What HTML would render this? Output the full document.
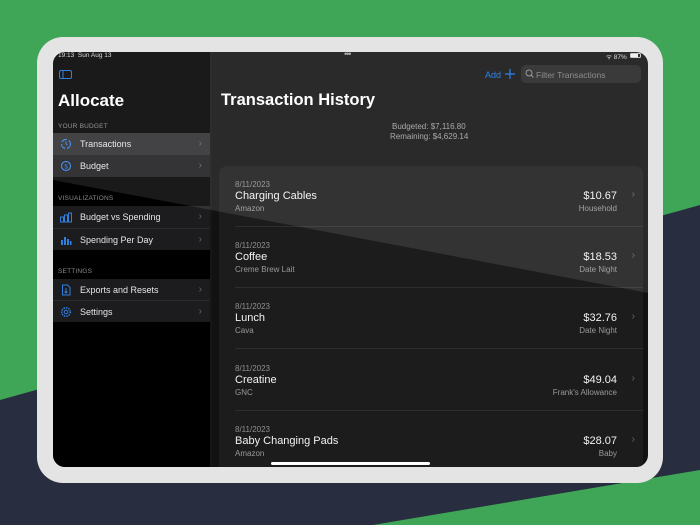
<!DOCTYPE html>
<html><head><meta charset="utf-8"><style>
*{margin:0;padding:0;box-sizing:border-box}
body{width:700px;height:525px;overflow:hidden;background:#40a657;font-family:"Liberation Sans",sans-serif;position:relative}
.abs{position:absolute}
.t{position:absolute;white-space:nowrap}
.row{position:absolute;left:53px;width:157px;height:22px;background:#1c1c1e}
.row .l{position:absolute;left:27px;top:6px;font-size:9px;color:#e6e6e6}
.row .c{position:absolute;right:8px;top:5px;font-size:10px;color:#666}
.row svg{position:absolute;left:7px;top:5px}
.sec{position:absolute;left:58px;font-size:6.5px;color:#8a8a8a;letter-spacing:.2px}
.tr{position:absolute;left:219px;width:424px;height:61px}
.tr .d{position:absolute;left:16px;top:14px;font-size:8px;color:#8e8e8e}
.tr .n{position:absolute;left:16px;top:24px;font-size:11px;color:#f2f2f2}
.tr .m{position:absolute;left:16px;top:38px;font-size:8px;color:#999}
.tr .a{position:absolute;right:26px;top:24px;font-size:11px;color:#f2f2f2}
.tr .k{position:absolute;right:26px;top:38px;font-size:8px;color:#999}
.tr .ch{position:absolute;right:8px;top:23px;font-size:10px;color:#666}
.tr .sep{position:absolute;left:16px;right:0;bottom:0;height:1px;background:#2e2e2e}
</style></head><body>
<svg class="abs" style="left:0;top:0" width="700" height="525"><polygon points="0,400 700,205 700,470 373,525 0,525" fill="#282d40"/></svg>
<div class="abs" style="left:37px;top:37px;width:626px;height:446px;background:#e4e4e4;border-radius:26px"></div>
<div class="abs" style="left:53px;top:52px;width:595px;height:415px;border-radius:12px;overflow:hidden;background:#121212">
 <div class="abs" style="left:0;top:0;width:157px;height:415px;background:#000"></div>
 <div class="abs" style="left:157px;top:0;width:2px;height:415px;background:#161616"></div>
 <div class="abs" style="left:166px;top:114px;width:424px;height:320px;background:#1c1c1c;border-radius:8px"></div>
</div>
<div class="row" style="top:133px;background:#2e2e30"><svg width="12" height="12" viewBox="0 0 12 12"><circle cx="6" cy="6" r="4.5" fill="none" stroke="#2f7fe0" stroke-width="1.2" stroke-dasharray="6 2"/><path d="M6 3.5V6l1.5 1" stroke="#2f7fe0" fill="none"/></svg><span class="l">Transactions</span><span class="c">›</span></div>
<div class="row" style="top:155px;background:#1e1e20"><svg width="12" height="12" viewBox="0 0 12 12"><circle cx="6" cy="6" r="4.5" fill="none" stroke="#2f7fe0" stroke-width="1.2"/><text x="6" y="8.5" font-size="6" fill="#2f7fe0" text-anchor="middle">$</text></svg><span class="l">Budget</span><span class="c">›</span></div>
<div class="row" style="top:206px"><svg width="12" height="12" viewBox="0 0 12 12"><rect x="0.5" y="6" width="3" height="5" fill="none" stroke="#2f7fe0"/><rect x="4.5" y="4" width="3" height="7" fill="none" stroke="#2f7fe0"/><rect x="8.5" y="2" width="3" height="9" fill="none" stroke="#2f7fe0"/></svg><span class="l">Budget vs Spending</span><span class="c">›</span></div>
<div class="row" style="top:228px;border-top:1px solid #2a2a2a"><svg width="12" height="12" viewBox="0 0 12 12"><path d="M1 11V6h2v5M4 11V3h2v8M7 11V5h2v6M10 11V7h1.5v4" fill="#2f7fe0"/></svg><span class="l">Spending Per Day</span><span class="c">›</span></div>
<div class="row" style="top:279px"><svg width="12" height="12" viewBox="0 0 12 12"><path d="M2.5 1h5l2.5 2.5V11h-7.5z" fill="none" stroke="#2f7fe0"/><path d="M6 4v5M4.5 7.5L6 9l1.5-1.5" stroke="#2f7fe0" fill="none"/></svg><span class="l">Exports and Resets</span><span class="c">›</span></div>
<div class="row" style="top:300px;border-top:1px solid #2a2a2a"><svg width="12" height="12" viewBox="0 0 12 12"><circle cx="6" cy="6" r="4.3" fill="none" stroke="#2f7fe0" stroke-width="1.5" stroke-dasharray="1.5 1"/><circle cx="6" cy="6" r="1.8" fill="none" stroke="#2f7fe0"/></svg><span class="l">Settings</span><span class="c">›</span></div>
<div class="sec" style="top:123px">YOUR BUDGET</div>
<div class="sec" style="top:195px">VISUALIZATIONS</div>
<div class="sec" style="top:268px">SETTINGS</div>
<div class="tr" style="top:166px"><span class="d">8/11/2023</span><span class="n">Charging Cables</span><span class="m">Amazon</span><span class="a">$10.67</span><span class="k">Household</span><span class="ch">›</span><div class="sep"></div></div>
<div class="tr" style="top:227px"><span class="d">8/11/2023</span><span class="n">Coffee</span><span class="m">Creme Brew Lait</span><span class="a">$18.53</span><span class="k">Date Night</span><span class="ch">›</span><div class="sep"></div></div>
<div class="tr" style="top:288px"><span class="d">8/11/2023</span><span class="n">Lunch</span><span class="m">Cava</span><span class="a">$32.76</span><span class="k">Date Night</span><span class="ch">›</span><div class="sep"></div></div>
<div class="tr" style="top:350px"><span class="d">8/11/2023</span><span class="n">Creatine</span><span class="m">GNC</span><span class="a">$49.04</span><span class="k">Frank's Allowance</span><span class="ch">›</span><div class="sep"></div></div>
<div class="tr" style="top:411px"><span class="d">8/11/2023</span><span class="n">Baby Changing Pads</span><span class="m">Amazon</span><span class="a">$28.07</span><span class="k">Baby</span><span class="ch">›</span></div>
<svg class="abs" style="left:0;top:0" width="700" height="525"><polygon points="53,52 648,52 648,293 53,180" fill="rgba(255,255,255,0.1)"/></svg>
<div class="t" style="left:58px;top:52px;font-size:6.5px;color:#ddd">19:13&nbsp; Sun Aug 13</div>
<div class="t" style="left:344px;top:49px;font-size:9px;color:#aaa;letter-spacing:-1px">•••</div>
<div class="t" style="left:606px;top:52px;font-size:6.5px;color:#ddd">ᯤ 87%</div>
<div class="abs" style="left:630px;top:53px;width:11px;height:5px;border:1px solid #ccc;border-radius:1.5px"><div style="width:7px;height:3px;background:#eee"></div></div>
<svg class="abs" style="left:59px;top:70px" width="13" height="9"><rect x="0.5" y="0.5" width="12" height="8" rx="1.5" fill="none" stroke="#2f7fe0"/><path d="M4 1v7" stroke="#2f7fe0"/></svg>
<div class="t" style="left:58px;top:91px;font-size:17px;font-weight:bold;color:#fff">Allocate</div>
<div class="t" style="left:221px;top:91px;font-size:16.5px;font-weight:bold;color:#fff">Transaction History</div>
<div class="t" style="left:485px;top:70px;font-size:9px;color:#2f84ea">Add</div>
<svg class="abs" style="left:504px;top:68px" width="12" height="12"><path d="M6 1v10M1 6h10" stroke="#2f84ea" stroke-width="1.2"/></svg>
<div class="abs" style="left:521px;top:65px;width:120px;height:18px;background:#3a3a3a;border-radius:5px"></div>
<svg class="abs" style="left:525px;top:69px" width="9" height="10"><circle cx="4" cy="4" r="3" fill="none" stroke="#999"/><path d="M6 6l2.5 2.5" stroke="#999"/></svg>
<div class="t" style="left:536px;top:70px;font-size:8.5px;color:#8f8f8f">Filter Transactions</div>
<div class="t" style="left:392px;top:122px;font-size:8px;color:#aaa">Budgeted: $7,116.80</div>
<div class="t" style="left:390px;top:132px;font-size:8px;color:#aaa">Remaining: $4,629.14</div>
<div class="abs" style="left:271px;top:462px;width:159px;height:3px;background:#fff;border-radius:2px"></div>
</body></html>
